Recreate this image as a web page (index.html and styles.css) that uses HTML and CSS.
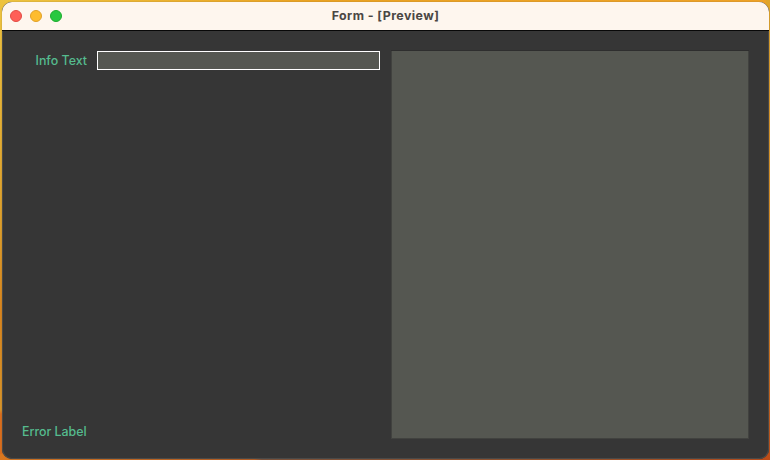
FILE: index.html
```html
<!DOCTYPE html>
<html lang="en">
<head>
<meta charset="utf-8">
<title>Form - [Preview]</title>
<link rel="stylesheet" href="styles.css">
</head>
<body>
<main class="window">
  <header class="titlebar">
    <div class="controls"><span class="dot close"></span><span class="dot minimize"></span><span class="dot expand"></span></div>
    <h1 class="title">Form - [Preview]</h1>
  </header>
  <form class="content">
    <div class="fields">
      <div class="row">
        <label class="label" for="info">Info Text</label>
        <input class="input" id="info" type="text">
      </div>
      <div class="error">Error Label</div>
    </div>
    <div class="panel"></div>
  </form>
</main>
</body>
</html>
```
FILE: styles.css
```css
* { box-sizing: border-box; }
html { height: 100%; }
body {
  margin: 0;
  height: 460px;
  padding: 2px 1px 1px 2px;
  overflow: hidden;
  font-family: Inter, sans-serif;
  background:
    linear-gradient(#dfa52b, #e18b20 65%, #bd4b17) right / 4px 100% no-repeat,
    linear-gradient(90deg, #d9771f, #b85c20 33%, #7c5038 34%, #995027 75%, #bd4b17) bottom / 100% 6px no-repeat,
    linear-gradient(#edc33f, #dc9d2a 50%, #d8841d 68%, #d79429 89%, #d96d1c 90%) left / 8px 100% no-repeat,
    linear-gradient(90deg, #edc33f, #e9a222 40%, #eda127);
}
.window {
  display: flex;
  flex-direction: column;
  height: 457px;
  border-radius: 10px;
  overflow: hidden;
  background: #363636;
  box-shadow: 0 0 1px 0 #60584a, inset 0 0 0 1px #4a4a49;
}
.titlebar {
  display: grid;
  grid-template-columns: 1fr auto 1fr;
  align-items: center;
  flex: 0 0 29px;
  padding: 0 8px 1px;
  background: #fef6ee;
  border-bottom: 1px solid #080808;
}
.controls { display: flex; gap: 8px; }
.dot { width: 12px; height: 12px; border-radius: 50%; border: 1px solid; }
.close { background: #ff5f57; border-color: #e24b43; }
.minimize { background: #febc2e; border-color: #e0a028; }
.expand { background: #28c840; border-color: #1cac2d; }
.title { margin: 0; font-size: 12.4px; line-height: 16px; font-weight: 700; letter-spacing: 0.43px; color: #4b4744; }
.content {
  flex: 1;
  display: grid;
  grid-template-columns: 360px 358px;
  gap: 9px;
  margin: 0;
  padding: 20px 18px 20px 20px;
}
.fields { display: flex; flex-direction: column; justify-content: space-between; }
.row { display: flex; align-items: flex-start; justify-content: flex-end; gap: 10px; margin-right: 2px; }
.label, .error { font-size: 12.4px; line-height: 19px; font-weight: 500; letter-spacing: 0; color: #55bb8e; }
.error { margin-bottom: -2px; }
.input {
  width: 283px;
  height: 19px;
  margin: 0;
  padding: 0 3px;
  border: 1px solid #fff;
  border-radius: 0;
  outline: none;
  background: #555751;
  color: #55bb8e;
  font: 12.4px Inter, sans-serif;
}
.panel { background: #555751; border: 1px solid #41423f; border-width: 0 1px 1px; box-shadow: 0 -1px #2e2e2e; }
```
